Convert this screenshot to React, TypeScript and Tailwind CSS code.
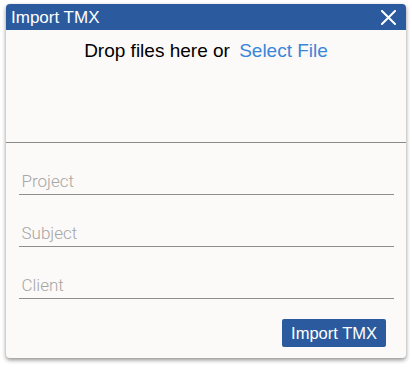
import React from "react";

const fields = ["Project", "Subject", "Client"];

const CloseIcon = () => (
	<svg width="15" height="15" viewBox="0 0 15 15" fill="none">
		<path d="M1 1L14 14M14 1L1 14" stroke="white" strokeWidth="2" strokeLinecap="square" />
	</svg>
);

const App = () => {
	return (
		<div className="min-h-[367px] w-[412px] bg-white pl-[6px] pt-[4px]">
			<div className="w-[400px] overflow-hidden rounded-[4px] bg-[#fbfaf8] shadow-[0_2px_4px_rgba(0,0,0,0.45)] font-['Liberation_Sans',Arial,sans-serif]">
				<div className="flex h-[26px] items-center justify-between bg-[#2b5b9e] pl-[5px] pr-[10px]">
					<span className="text-[17px] leading-none text-white">Import TMX</span>
					<button className="flex items-center justify-center">
						<CloseIcon />
					</button>
				</div>
				<div className="h-[113px] border-b border-[#8a8a8a] pt-[9px] text-center text-[19px] leading-[23px]">
					<span className="text-black">Drop files here or </span>
					<span className="ml-[4px] cursor-pointer text-[#3a86d9]">Select File</span>
				</div>
				<div className="flex flex-col gap-[22px] px-[12.5px] pt-[22px]">
					{fields.map((field) => (
						<input
							key={field}
							placeholder={field}
							className="h-[30px] w-full border-b border-[#8e8e8e] bg-transparent pl-[3px] pt-[3px] text-[17px] font-light outline-none placeholder:text-[#a6a6a6] font-['Roboto',sans-serif]"
						/>
					))}
				</div>
				<div className="flex justify-end pb-[11px] pr-[20px] pt-[20px]">
					<button className="h-[28px] rounded-[2px] bg-[#2b5b9e] px-[9px] text-[16.5px] text-white">
						Import TMX
					</button>
				</div>
			</div>
		</div>
	);
};

export default App;
